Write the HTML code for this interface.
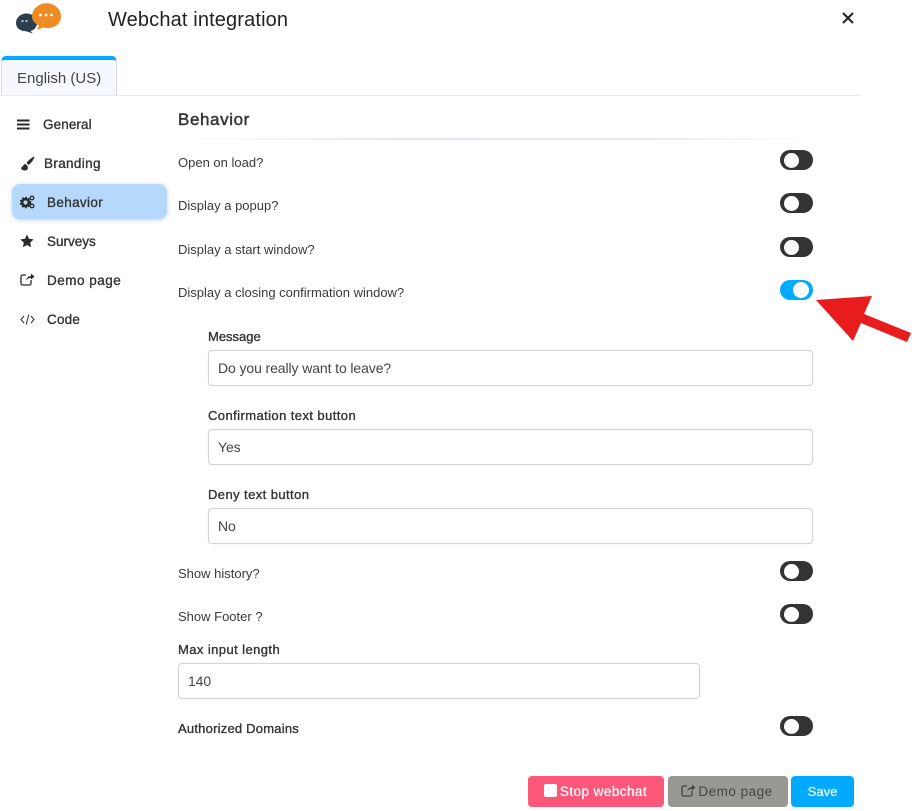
<!DOCTYPE html>
<html><head><meta charset="utf-8">
<style>
*{box-sizing:border-box}
html,body{margin:0;padding:0;background:#fff}
body{width:912px;height:811px;position:relative;overflow:hidden;font-family:"Liberation Sans",sans-serif;color:#333}
.t{position:absolute;white-space:nowrap;line-height:18px;font-size:13px;color:#3a3a3a}
.n{font-size:13.5px;font-weight:400;color:#333;-webkit-text-stroke:.35px #333}
.b{font-size:13px;color:#333;-webkit-text-stroke:.35px #333}
.sw{position:absolute;left:780px;width:33px;height:20px;border-radius:10px;background:#333}
.sw:after{content:"";position:absolute;left:4px;top:2.5px;width:15px;height:15px;border-radius:50%;background:#fff}
.sw.on{background:#00aaff}
.sw.on:after{left:13px;top:2px;width:16px;height:16px}
.in{position:absolute;height:36px;border:1px solid #d4d4d4;border-radius:4px;background:#fff;font-size:14px;line-height:34px;padding-left:9px;color:#444;letter-spacing:-.1px;box-shadow:0 0 1px #ddd}
.btn{position:absolute;top:776px;height:31px;border-radius:4px;font-size:13.5px;line-height:31px;text-align:center;white-space:nowrap}
svg{position:absolute;overflow:visible}
</style></head><body>

<svg style="left:0;top:0" width="70" height="40" viewBox="0 0 70 40">
<path d="M16 23c0-5.500 4.800-9.500 10.500-9.500S37 17.500 37 23c0 4-2.500 7-6.500 8l2.500 2.500-7-2.200C20 31 16 28 16 23z" fill="#2c3e50"/>
<circle cx="22.500" cy="21" r="1.100" fill="#ccc"/><circle cx="26.500" cy="21" r="1.100" fill="#ccc"/>
<path d="M32 16.500C32 9 38.500 3.200 46.500 3.200S61 9 61 16.500 54.500 28 47 28c-1.500 0-3-.2-4-.6L37 30l2-4.500C35 23.500 32 20.500 32 16.500z" fill="#ee8b22"/>
<circle cx="40.500" cy="15" r="1.400" fill="#fff"/><circle cx="46" cy="15" r="1.400" fill="#fff"/><circle cx="51.500" cy="15" r="1.400" fill="#fff"/>
</svg>
<div class="t" style="left:108px;top:8px;font-size:20px;line-height:24px;color:#222;letter-spacing:.14px">Webchat integration</div>
<svg style="left:842px;top:12px" width="12" height="12" viewBox="0 0 12 12"><path d="M1 1l10 10M11 1L1 11" stroke="#222" stroke-width="2.100"/></svg>

<div style="position:absolute;left:1px;top:56px;width:116px;height:40px;background:#f5f9ff;border:1px solid #dcd8dc;border-top:4px solid #00aaff;border-radius:5px 5px 0 0"></div>
<div class="t" style="left:17px;top:69px;font-size:15px;line-height:20px;color:#444">English (US)</div>
<div style="position:absolute;left:1px;top:95px;width:861px;height:1px;background:#e8e8ee"></div>

<div style="position:absolute;left:12px;top:184px;width:155px;height:35px;background:#b6d9fb;border-radius:8px;box-shadow:0 1px 4px rgba(120,170,230,.5)"></div>
<svg style="left:17px;top:119px" width="13" height="11" viewBox="0 0 13 11"><path d="M0 1.500h12.500M0 5.500h12.500M0 9.500h12.500" stroke="#2a2a2a" stroke-width="2"/></svg>
<div class="t n" style="left:43px;top:116px;letter-spacing:.1px">General</div>
<svg style="left:20px;top:156px" width="15" height="15" viewBox="0 0 15 15"><path d="M14.500.5c-2 .5-6 3.500-8 6.500l2 2c3-2 5.500-6 6-8.500zM5.500 8C3 8 3.500 11 1 11.500c0 2 2 3 4 3 2.500 0 3.500-2 2.500-4.500z" fill="#2a2a2a"/></svg>
<div class="t n" style="left:44px;top:155px;letter-spacing:.35px">Branding</div>
<svg style="left:20px;top:195px" width="15" height="14" viewBox="0 0 15 14"><circle cx="5.500" cy="7.500" r="3.400" fill="none" stroke="#2a2a2a" stroke-width="2.600"/><circle cx="5.500" cy="7.500" r="5" fill="none" stroke="#2a2a2a" stroke-width="1.500" stroke-dasharray="1.800 1.500"/><circle cx="12" cy="3" r="1.800" fill="none" stroke="#2a2a2a" stroke-width="1.300"/><circle cx="12" cy="11" r="1.800" fill="none" stroke="#2a2a2a" stroke-width="1.300"/></svg>
<div class="t n" style="left:47px;top:194px;letter-spacing:.35px">Behavior</div>
<svg style="left:20px;top:234px" width="14" height="14" viewBox="0 0 14 14"><path d="M7 .5l2 4.300 4.700.6-3.500 3.200.9 4.700L7 11l-4.100 2.300.9-4.700L.3 5.400 5 4.800z" fill="#2a2a2a"/></svg>
<div class="t n" style="left:47px;top:233px">Surveys</div>
<svg style="left:20px;top:272px" width="15" height="14" viewBox="0 0 15 14" fill="none" stroke="#2a2a2a" stroke-width="1.300"><path d="M11 8v3.500a1.500 1.500 0 0 1-1.500 1.500h-7A1.500 1.500 0 0 1 1 11.500v-7A1.500 1.500 0 0 1 2.500 3H6"/><path d="M6 8.500C6.500 5.500 9 4 11 4V1.500L14.500 4.500 11 7.500V6C9 6 7.500 6.500 6 8.500z" fill="#2a2a2a" stroke="none"/></svg>
<div class="t n" style="left:47px;top:272px;letter-spacing:.5px">Demo page</div>
<svg style="left:20px;top:314px" width="15" height="11" viewBox="0 0 15 11" fill="none" stroke="#2a2a2a" stroke-width="1"><path d="M4 2L1 5.500 4 9M11 2l3 3.500L11 9M8.800 .5L6.200 10.500"/></svg>
<div class="t n" style="left:47px;top:311px;letter-spacing:.2px">Code</div>

<div class="t" style="left:178px;top:109px;font-size:17px;line-height:22px;color:#333;-webkit-text-stroke:.45px #333;letter-spacing:.6px">Behavior</div>
<div style="position:absolute;left:178px;top:138px;width:636px;height:2px;background:linear-gradient(90deg,#fff,#e4e4f8 35%,#e8e8f4 75%,#fff)"></div>

<div class="t" style="left:178px;top:154px">Open on load?</div><div class="sw" style="top:150px"></div>
<div class="t" style="left:178px;top:197px">Display a popup?</div><div class="sw" style="top:193px"></div>
<div class="t" style="left:178px;top:241px">Display a start window?</div><div class="sw" style="top:237px"></div>
<div class="t" style="left:178px;top:284px">Display a closing confirmation window?</div><div class="sw on" style="top:280px"></div>

<svg style="left:810px;top:290px" width="102" height="55" viewBox="0 0 102 55"><path d="M6 10L62 6 54 24 101 43 97 52 51 33 43 51z" fill="#e81c1c"/></svg>

<div class="t b" style="left:208px;top:328px">Message</div>
<div class="in" style="left:208px;top:350px;width:605px">Do you really want to leave?</div>
<div class="t b" style="left:208px;top:407px;letter-spacing:.42px">Confirmation text button</div>
<div class="in" style="left:208px;top:429px;width:605px">Yes</div>
<div class="t b" style="left:208px;top:486px;letter-spacing:.42px">Deny text button</div>
<div class="in" style="left:208px;top:508px;width:605px">No</div>

<div class="t" style="left:178px;top:565px">Show history?</div><div class="sw" style="top:561px"></div>
<div class="t" style="left:178px;top:608px">Show Footer ?</div><div class="sw" style="top:604px"></div>
<div class="t b" style="left:178px;top:641px;letter-spacing:.42px">Max input length</div>
<div class="in" style="left:178px;top:663px;width:522px">140</div>
<div class="t b" style="left:178px;top:720px;letter-spacing:.22px">Authorized Domains</div><div class="sw" style="top:716px"></div>

<div class="btn" style="left:528px;width:136px;background:#fb5779;color:#fff;padding-left:15px;-webkit-text-stroke:.25px #fff;letter-spacing:.45px">Stop webchat</div>
<div style="position:absolute;left:544px;top:784px;width:13px;height:13px;background:#fff;border-radius:2px"></div>
<div class="btn" style="left:668px;width:120px;background:#999994;color:#444;padding-left:15px;letter-spacing:.5px">Demo page</div>
<svg style="left:681px;top:783px" width="15" height="14" viewBox="0 0 15 14" fill="none" stroke="#444" stroke-width="1.300"><path d="M11 8v3.500a1.500 1.500 0 0 1-1.500 1.500h-7A1.500 1.500 0 0 1 1 11.500v-7A1.500 1.500 0 0 1 2.500 3H6"/><path d="M6 8.500C6.500 5.500 9 4 11 4V1.500L14.500 4.500 11 7.500V6C9 6 7.500 6.500 6 8.500z" fill="#444" stroke="none"/></svg>
<div class="btn" style="left:791px;width:63px;background:#00aaff;color:#fff;font-size:13px;-webkit-text-stroke:.2px #fff">Save</div>
</body></html>
